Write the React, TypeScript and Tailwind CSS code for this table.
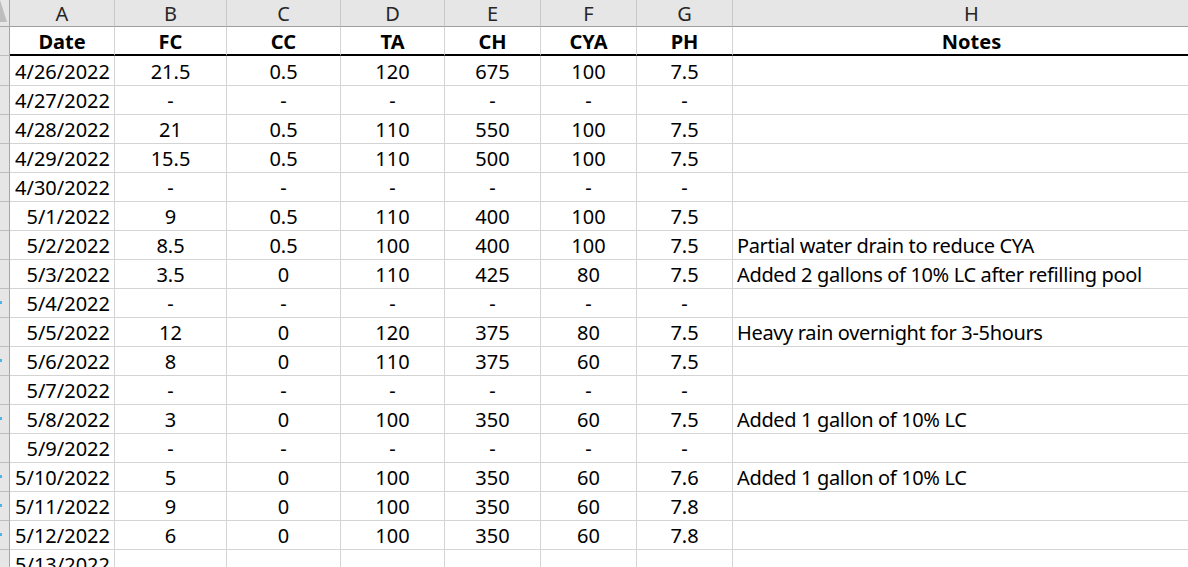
import React from "react";

const COLS = ["A", "B", "C", "D", "E", "F", "G", "H"];
const HEAD = ["Date", "FC", "CC", "TA", "CH", "CYA", "PH", "Notes"];

type Row = [string, string, string, string, string, string, string, string];

const ROWS: Row[] = [
  ["4/26/2022", "21.5", "0.5", "120", "675", "100", "7.5", ""],
  ["4/27/2022", "-", "-", "-", "-", "-", "-", ""],
  ["4/28/2022", "21", "0.5", "110", "550", "100", "7.5", ""],
  ["4/29/2022", "15.5", "0.5", "110", "500", "100", "7.5", ""],
  ["4/30/2022", "-", "-", "-", "-", "-", "-", ""],
  ["5/1/2022", "9", "0.5", "110", "400", "100", "7.5", ""],
  ["5/2/2022", "8.5", "0.5", "100", "400", "100", "7.5", "Partial water drain to reduce CYA"],
  ["5/3/2022", "3.5", "0", "110", "425", "80", "7.5", "Added 2 gallons of 10% LC after refilling pool"],
  ["5/4/2022", "-", "-", "-", "-", "-", "-", ""],
  ["5/5/2022", "12", "0", "120", "375", "80", "7.5", "Heavy rain overnight for 3-5hours"],
  ["5/6/2022", "8", "0", "110", "375", "60", "7.5", ""],
  ["5/7/2022", "-", "-", "-", "-", "-", "-", ""],
  ["5/8/2022", "3", "0", "100", "350", "60", "7.5", "Added 1 gallon of 10% LC"],
  ["5/9/2022", "-", "-", "-", "-", "-", "-", ""],
  ["5/10/2022", "5", "0", "100", "350", "60", "7.6", "Added 1 gallon of 10% LC"],
  ["5/11/2022", "9", "0", "100", "350", "60", "7.8", ""],
  ["5/12/2022", "6", "0", "100", "350", "60", "7.8", ""],
  ["5/13/2022", "", "", "", "", "", "", ""],
];

const MARKED = new Set([8, 10, 12, 14, 15, 16]);

const font = { fontFamily: '"Noto Sans", "Open Sans", sans-serif' };

export default function App() {
  return (
    <div
      className="w-[1188px] h-[567px] overflow-hidden bg-white text-black"
      style={font}
    >
      <div className="grid w-[1211px] grid-cols-[10px_105px_112px_114px_104px_96px_96px_96px_478px] text-[20px]">
        {/* column header row */}
        <div className="h-[27px] bg-[#e6e6e6] border-b border-r border-[#a6a6a6] relative overflow-hidden">
          <div className="absolute left-0 top-0 w-0 h-0 border-l-[7px] border-l-[#bdbdbd] border-t-[22px] border-t-transparent border-b-0" />
        </div>
        {COLS.map((c) => (
          <div
            key={c}
            className="h-[27px] bg-[#e6e6e6] border-b border-b-[#9e9e9e] border-r border-r-[#c8c8c8] flex items-center justify-center leading-[26px] pt-[2px] text-[#262626]"
          >
            {c}
          </div>
        ))}

        {/* header titles row */}
        <div className="h-[29px] bg-[#e6e6e6] border-r border-[#a6a6a6] border-b border-b-[#bdbdbd]" />
        {HEAD.map((h) => (
          <div
            key={h}
            className="h-[29px] border-b-2 border-b-black border-r border-r-[#d4d4d4] flex items-center justify-center font-bold leading-[27px] pt-[2px]"
          >
            {h}
          </div>
        ))}

        {ROWS.map((r, i) => {
          const h = i === 0 ? "h-[30px]" : "h-[29px]";
          return (
            <React.Fragment key={i}>
              <div
                className={`${h} bg-[#e6e6e6] border-r border-[#a6a6a6] border-b border-b-[#bdbdbd] relative`}
              >
                {MARKED.has(i) && (
                  <div className="absolute left-0 top-[12px] w-[2px] h-[3px] bg-[#4cb4e6]" />
                )}
              </div>
              {r.map((v, j) => (
                <div
                  key={j}
                  className={`${h} border-b border-r border-[#d4d4d4] flex items-center leading-[28px] pt-[2px] whitespace-nowrap overflow-visible ${
                    j === 0
                      ? "justify-end pr-[4px]"
                      : j === 7
                      ? "justify-start pl-[4px] tracking-[-0.35px]"
                      : "justify-center"
                  }`}
                >
                  {v}
                </div>
              ))}
            </React.Fragment>
          );
        })}
      </div>
    </div>
  );
}
